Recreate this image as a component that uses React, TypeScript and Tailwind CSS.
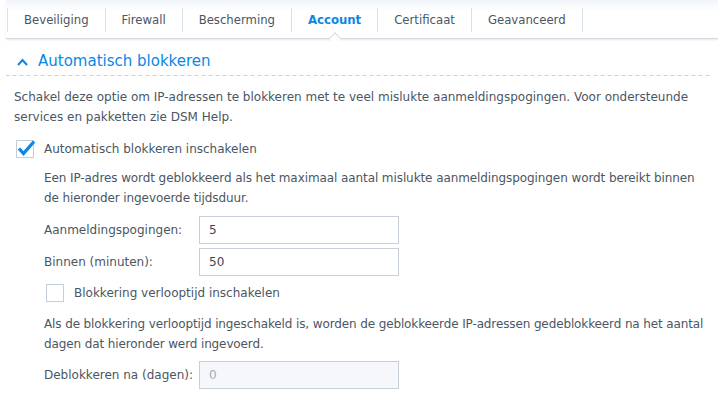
import React from "react";

const tabs = ["Beveiliging", "Firewall", "Bescherming", "Account", "Certificaat", "Geavanceerd"];

function Checkbox({ checked }: { checked: boolean }) {
  return (
    <div className="relative w-[18px] h-[18px] border border-[#c5ced8] bg-white shrink-0">
      {checked && (
        <svg
          className="absolute left-[-1px] top-[-1px] overflow-visible"
          width="18"
          height="18"
          viewBox="0 0 18 18"
        >
          <path
            d="M3 8.5 L7.5 13.5 L18 1.5"
            fill="none"
            stroke="#0a87e6"
            strokeWidth="3.2"
            strokeLinecap="butt"
            strokeLinejoin="miter"
          />
        </svg>
      )}
    </div>
  );
}

function Field({ label, value, disabled }: { label: string; value: string; disabled?: boolean }) {
  return (
    <div className="flex items-center h-[28px]">
      <div className="w-[155px] shrink-0">{label}</div>
      <div
        className={
          "w-[200px] h-[28px] border border-[#c7d0da] flex items-center pl-[9px] " +
          (disabled ? "bg-[#f5f7fa] text-[#a3abb4]" : "bg-white text-[#3d4650]")
        }
      >
        {value}
      </div>
    </div>
  );
}

export default function App() {
  return (
    <div className="w-[718px] h-[405px] bg-white overflow-hidden font-['DejaVu_Sans',sans-serif] text-[12px] text-[#4b5663]">
      <div className="relative ml-[6px] h-[39px] border-b border-[#d3d9e0] bg-linear-to-b from-[#f1f5fa] to-white to-[30%] shadow-[0_1px_2px_rgba(0,0,0,0.10)] flex items-start pt-2 pl-px">
        {tabs.map((t, i) => (
          <div
            key={t}
            className={
              "relative h-6 px-4 border-l border-[#d8e0e8] flex items-center pt-px text-[11.7px] " +
              (i === tabs.length - 1 ? "border-r " : "") +
              (t === "Account" ? "text-[#0a87e6] font-bold" : "text-[#4b5663]")
            }
          >
            {t}
            {t === "Account" && (
              <div className="absolute left-1/2 top-[26px] -ml-1 w-2 h-2 rotate-45 bg-white border-l border-t border-[#d3d9e0]" />
            )}
          </div>
        ))}
      </div>

      <div className="mx-[6px]">
        <div className="flex items-center h-[37px] pt-[8px] pl-[11px] bg-[linear-gradient(to_right,#c9d0d8_4px,transparent_4px)] bg-[length:7px_1px] bg-repeat-x bg-bottom">
          <svg width="11" height="8" viewBox="0 0 11 8" className="shrink-0">
            <path d="M1 7 L5.5 2 L10 7" fill="none" stroke="#0a87e6" strokeWidth="2" />
          </svg>
          <span className="ml-[10px] text-[15px] text-[#0a87e6]">Automatisch blokkeren</span>
        </div>

        <div className="px-2">
          <p className="mt-[11px] leading-[20px] whitespace-nowrap">
            Schakel deze optie om IP-adressen te blokkeren met te veel mislukte aanmeldingspogingen. Voor ondersteunde
            <br />
            services en pakketten zie DSM Help.
          </p>

          <div className="mt-[13px] flex items-center ml-0.5 h-[18px]">
            <Checkbox checked />
            <span className="ml-[10px]">Automatisch blokkeren inschakelen</span>
          </div>

          <div className="pl-[30px]">
            <p className="mt-[10px] leading-[20px] whitespace-nowrap tracking-[-0.09px]">
              Een IP-adres wordt geblokkeerd als het maximaal aantal mislukte aanmeldingspogingen wordt bereikt binnen
              <br />
              de hieronder ingevoerde tijdsduur.
            </p>

            <div className="mt-2 flex flex-col gap-1">
              <Field label="Aanmeldingspogingen:" value="5" />
              <Field label="Binnen (minuten):" value="50" />
            </div>

            <div className="mt-[8px] flex items-center ml-0.5 h-[18px]">
              <Checkbox checked={false} />
              <span className="ml-[10px]">Blokkering verlooptijd inschakelen</span>
            </div>

            <p className="mt-[12px] leading-[20px] whitespace-nowrap tracking-[-0.12px]">
              Als de blokkering verlooptijd ingeschakeld is, worden de geblokkeerde IP-adressen gedeblokkeerd na het aantal
              <br />
              dagen dat hieronder werd ingevoerd.
            </p>

            <div className="mt-[7px]">
              <Field label="Deblokkeren na (dagen):" value="0" disabled />
            </div>
          </div>
        </div>
      </div>
    </div>
  );
}
